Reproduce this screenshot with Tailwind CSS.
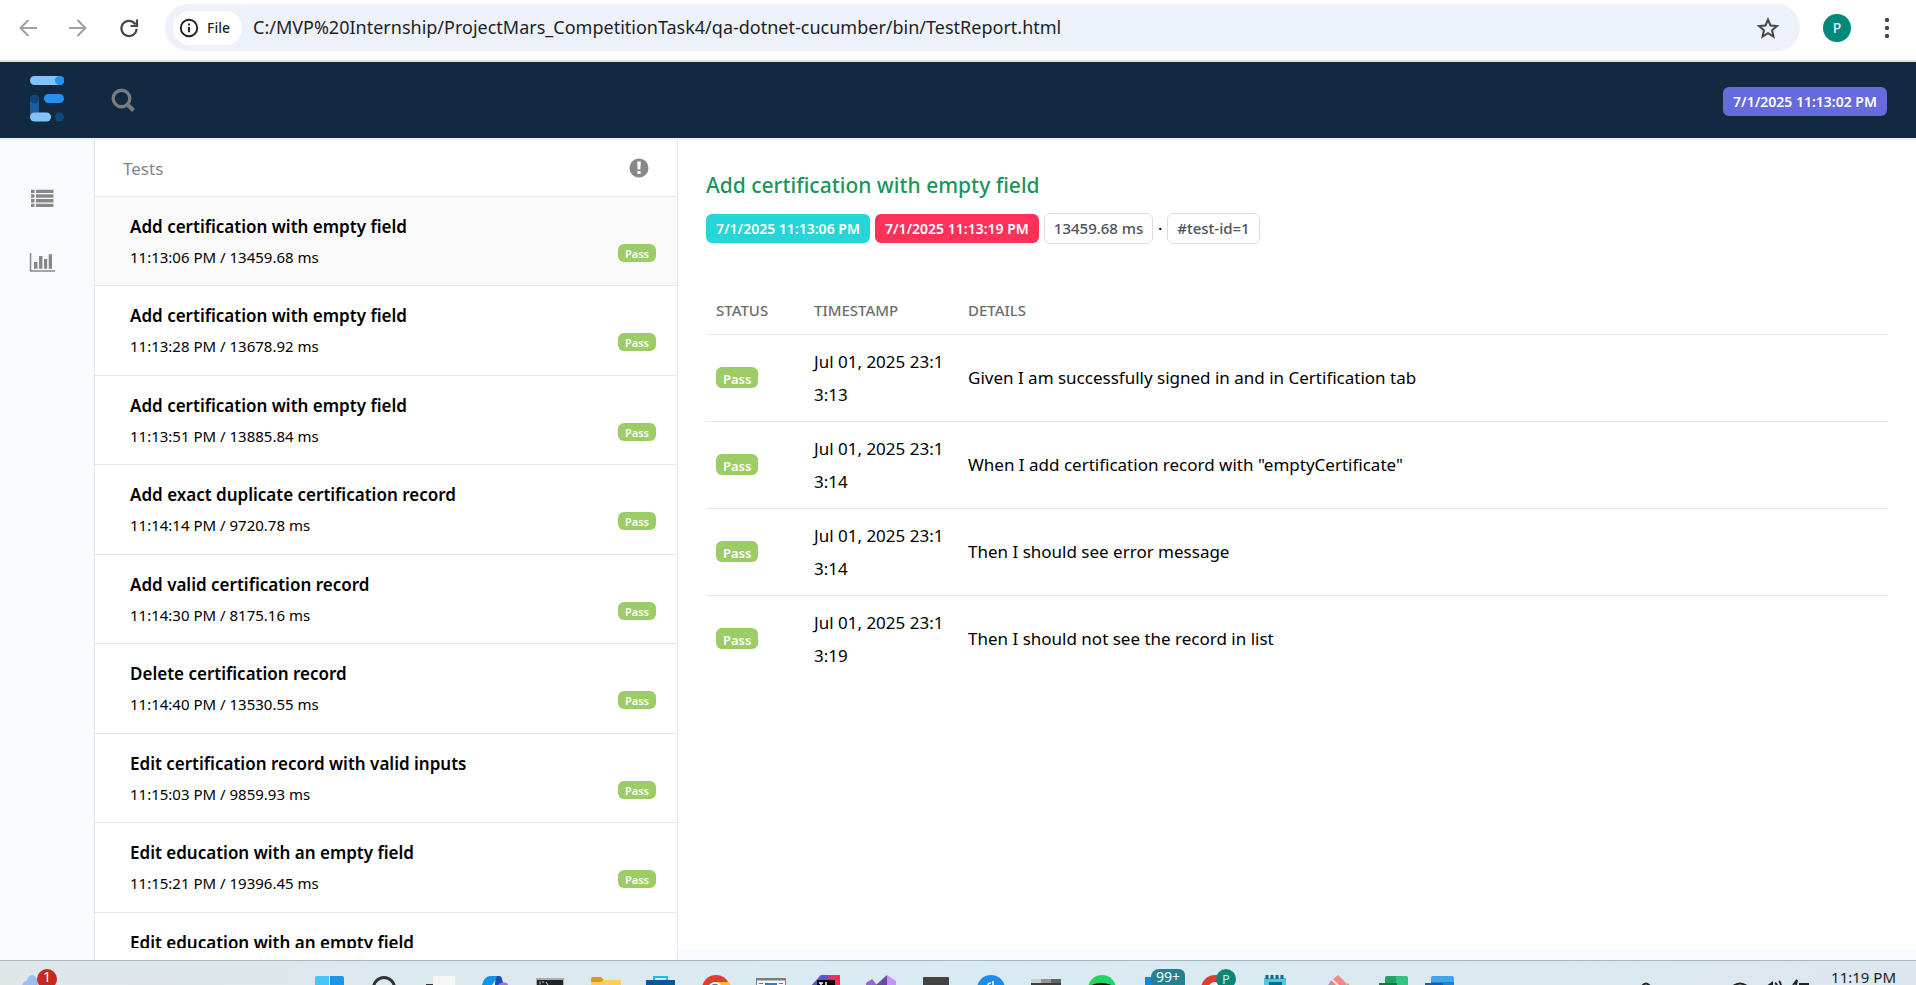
<!DOCTYPE html>
<html lang="en">
<head>
<meta charset="utf-8">
<title>TestReport</title>
<script src="https://cdn.jsdelivr.net/npm/@tailwindcss/browser@4"></script>
</head>
<body class="h-screen flex flex-col overflow-hidden bg-white font-['Noto_Sans','Open_Sans',sans-serif] text-black">

<!-- Browser toolbar -->
<div class="shrink-0 h-[62px] flex items-start pt-1 pl-4 pr-[17px] border-b-2 border-[#dfe4e0]">
  <div class="flex-1 flex items-center h-[47px]">
    <button class="w-6" aria-label="Back"><svg class="size-6" viewBox="0 0 24 24" fill="none" stroke="#a0a0a0" stroke-width="2"><path d="M21 12H5M12.500 4L4.500 12l8 8"/></svg></button>
    <button class="w-6 ml-[26px]" aria-label="Forward"><svg class="size-6" viewBox="0 0 24 24" fill="none" stroke="#a0a0a0" stroke-width="2"><path d="M3 12h16M11.500 4l8 8-8 8"/></svg></button>
    <button class="w-6 ml-[27px]" aria-label="Reload"><svg class="size-6" viewBox="0 0 24 24" fill="none" stroke="#444746" stroke-width="2.200"><path d="M18.500 8.500A7.600 7.600 0 1 0 19.600 12.800"/><path d="M20 3.500V10h-6.500"/></svg></button>
    <div class="flex-1 flex items-center h-[47px] ml-6 rounded-full bg-[#ecf1fa] pl-2 pr-5">
      <button class="flex items-center gap-2 h-[34px] pl-[6px] pr-3 rounded-full bg-white text-[14px] font-medium text-[#1f1f1f]">
        <svg class="size-5" viewBox="0 0 20 20" fill="none" stroke="#1f1f1f" stroke-width="1.900"><circle cx="10" cy="10" r="8.200"/><path d="M10 9v5.200M10 5.500v2"/></svg>File</button>
      <input class="flex-1 ml-[11px] outline-none bg-transparent text-[18px] text-[#1f1f1f]" aria-label="Address" value="C:/MVP%20Internship/ProjectMars_CompetitionTask4/qa-dotnet-cucumber/bin/TestReport.html">
      <button aria-label="Bookmark"><svg class="size-6" viewBox="0 0 24 24" fill="none" stroke="#444746" stroke-width="2"><path d="M12 3.600l2.500 5.900 6.400.6-4.900 4.200 1.500 6.300-5.500-3.400-5.500 3.400 1.500-6.300-4.900-4.200 6.400-.6z"/></svg></button>
    </div>
    <button class="size-7 ml-[23px] rounded-full bg-[#00897b] text-white text-[14px]" aria-label="Profile">P</button>
    <button class="ml-6" aria-label="Menu"><svg class="size-6" viewBox="0 0 24 24" fill="#444746"><circle cx="12" cy="4" r="2.200"/><circle cx="12" cy="12" r="2.200"/><circle cx="12" cy="20" r="2.200"/></svg></button>
  </div>
</div>

<!-- Report header -->
<header class="shrink-0 h-[78px] flex items-center bg-[#122942] border-b-2 border-[#eeeff1] pl-[30px] pr-[29px]">
  <a href="#" aria-label="Report home" class="block mb-[2px]"><svg class="w-[35px] h-[46px]" viewBox="0 0 35 46"><rect x="0" y="19" width="9" height="24" rx="4.500" fill="#17609f"/><circle cx="4.500" cy="23" r="4.500" fill="#12457d"/><rect x="0" y="0" width="34" height="9" rx="4.500" fill="#84c3f7"/><circle cx="29.500" cy="4.500" r="4.500" fill="#2391ee"/><rect x="14" y="18" width="20" height="9" rx="4.500" fill="#2391ee"/><rect x="0" y="36.500" width="21" height="9" rx="4.500" fill="#84c3f7"/><circle cx="29.500" cy="41" r="4.500" fill="#12457d"/></svg></a>
  <button class="ml-[46px]" aria-label="Search"><svg class="size-6" viewBox="0 0 24 24" fill="none" stroke="#7b7b7f" stroke-width="3.400"><circle cx="10.500" cy="10.500" r="8.300"/><path d="M16.500 16.500l6 6" stroke-width="4"/></svg></button>
  <span class="ml-auto mt-[2px] flex items-center h-[29px] px-[10px] rounded-md bg-[#656add] text-white text-[14px] font-semibold">7/1/2025 11:13:02 PM</span>
</header>

<main class="flex-1 min-h-0 flex bg-[#f7faff]">
  <nav class="w-[94px] flex flex-col items-start pt-12 pl-[29px] gap-11">
    <a href="#tests" aria-label="Tests"><svg class="w-[26px] h-5" viewBox="0 0 26 20" fill="#888"><path d="M2 1.700h3.500v3.400H2zM7 1.700h17.500v3.400H7zM2 6.300h3.500v3.400H2zM7 6.300h17.500v3.400H7zM2 11h3.500v3.400H2zM7 11h17.500v3.400H7zM2 15.700h3.500v3.400H2zM7 15.700h17.500v3.400H7z"/></svg></a>
    <a href="#dashboard" aria-label="Dashboard"><svg class="w-[26px] h-5" viewBox="0 0 26 20" fill="#888"><path d="M.8 1h1.500v17.300H26v1.500H.8zM5 10h3.500v6.700H5zM10 4h3.400v12.700H10zM15 7h3.200v9.700H15zM19.700 2.200H23v14.500h-3.300z"/></svg></a>
  </nav>

  <section id="tests" class="w-[584px] flex flex-col bg-white border-x border-[#e6e7e9]">
    <div class="shrink-0 h-[57px] flex items-center justify-between pl-7 pr-7 border-b border-[#e6e7e9]">
      <h2 class="pt-[2px] text-[17px] text-[#858585]">Tests</h2>
      <button aria-label="Status filter"><svg class="size-5" viewBox="0 0 20 20"><circle cx="10" cy="10" r="9.500" fill="#888"/><path d="M8.200 3.500h3.600l-.4 8H8.600zM8.400 13h3.200v3H8.400z" fill="#fff"/></svg></button>
    </div>
    <ul id="list" class="flex-1 min-h-0 overflow-hidden mb-3"></ul>
  </section>

  <section class="flex-1 min-w-0 mb-[11px] bg-white pl-7 pr-7 pt-[31px]">
    <h1 class="text-[21px] leading-7 font-medium text-[#1b955b]">Add certification with empty field</h1>
    <div class="mt-[14px] flex items-center gap-[5px] text-[14px] font-semibold">
      <span class="flex items-center h-[29px] px-[10px] rounded-md bg-[#25d5d8] text-white">7/1/2025 11:13:06 PM</span>
      <span class="flex items-center h-[29px] px-[10px] rounded-md bg-[#ff3159] text-white">7/1/2025 11:13:19 PM</span>
      <span class="flex items-center h-[31px] px-[9px] rounded-md border border-[#dcdde0] text-[15px] font-medium text-[#4d5160]">13459.68 ms</span>
      <span>·</span>
      <span class="flex items-center h-[31px] px-[9px] rounded-md border border-[#dcdde0] text-[15px] font-medium text-[#4d5160]">#test-id=1</span>
    </div>
    <table class="mt-[42px] w-full table-fixed text-left">
      <thead>
        <tr class="h-12 border-b border-[#e6e7e9] text-[15px] text-[#6d6d6d]">
          <th class="w-[98px] pl-[10px] font-medium">STATUS</th><th class="w-[154px] pl-[10px] font-medium">TIMESTAMP</th><th class="pl-[10px] font-medium">DETAILS</th>
        </tr>
      </thead>
      <tbody id="steps" class="text-[17px] leading-[33px]"></tbody>
    </table>
  </section>
</main>

<!-- Taskbar: the window ends part-way down it, so only icon tops show -->
<footer class="shrink-0 h-[25px] flex items-start justify-between overflow-hidden border-t border-[#a9b7bb] bg-linear-to-r from-[#dee6e8] via-[#d8ebf2] to-[#dde6ee] pl-5 pr-5">
  <div class="flex">
    <button class="relative w-[282px] h-6" aria-label="Weather">
      <svg class="w-10 h-6" viewBox="0 0 40 24"><path d="M2 25q1-5 5-5 1-6 5-6t6 7v4z" fill="#9dbcf0"/></svg>
      <span class="absolute left-[17px] top-2 w-5 h-5 rounded-full bg-[#c42b1c] text-white text-[14px] leading-4 text-center">1</span>
    </button>
    <button class="w-[55px]" aria-label="Start"><svg class="w-[55px] h-6" viewBox="0 0 55 24"><path d="M13 17q0-2 2-2h12v9H13z" fill="#45c4fa"/><path d="M28 15h12q2 0 2 2v7H28z" fill="#1d95e6"/></svg></button>
    <button class="w-[55px]" aria-label="Search apps"><svg class="w-[55px] h-6" viewBox="0 0 55 24"><circle cx="27" cy="27" r="10.500" fill="none" stroke="#333" stroke-width="3"/></svg></button>
    <button class="w-[55px]" aria-label="Task view"><svg class="w-[55px] h-6" viewBox="0 0 55 24"><path d="M14 23h12v2H14z" fill="#333"/><rect x="21" y="15" width="22" height="12" rx="1" fill="#f6f6f6"/></svg></button>
    <button class="w-[55px]" aria-label="Copilot"><svg class="w-[55px] h-6" viewBox="0 0 55 24"><path d="M15 24q2-9 9-9h7l-6 9z" fill="#0f94e8"/><path d="M30 15h3q2 1 3 7l-3 2h-5q0-6 2-9z" fill="#1753b6"/><path d="M31 24q2-3 6-2.500 4 0 4 2.500z" fill="#a769e0"/></svg></button>
    <button class="w-[55px]" aria-label="Terminal"><svg class="w-[55px] h-6" viewBox="0 0 55 24"><path d="M14 17h28v8H14z" fill="#a7adb0"/><path d="M15 19h26v6H15z" fill="#222"/><path d="M18 20.500v3M20 21h2M24 21l2 3" stroke="#ccc"/></svg></button>
    <button class="w-[55px]" aria-label="File Explorer"><svg class="w-[55px] h-6" viewBox="0 0 55 24"><path d="M14 18q0-2 2-2h8l3 3v5H14z" fill="#dd9c06"/><path d="M14 21h10l3-2h17v6H14z" fill="#fdcf57"/></svg></button>
    <button class="w-[55px]" aria-label="Store"><svg class="w-[55px] h-6" viewBox="0 0 55 24"><path d="M22 21v-5h13v5" fill="none" stroke="#22b9fb" stroke-width="2"/><path d="M14 19h29v6H14z" fill="#0c559c"/></svg></button>
    <button class="w-[55px]" aria-label="Chrome"><svg class="w-[55px] h-6" viewBox="0 0 55 24"><circle cx="29" cy="28" r="14" fill="#e33b2e"/><path d="M29 21h13l2 4H29z" fill="#fbc02d"/><circle cx="28" cy="28" r="7" fill="#fff"/><circle cx="28" cy="28" r="5.200" fill="#3b78e7"/></svg></button>
    <button class="w-[55px]" aria-label="Run dialog"><svg class="w-[55px] h-6" viewBox="0 0 55 24"><path d="M14 17h30v8H14z" fill="#7d7d7b"/><path d="M15 19.500h28v5H15z" fill="#f8f8f8"/><path d="M23 22h12v3H23z" fill="#1686d9"/><path d="M17 22.500h4M37 22.500h4" stroke="#777"/></svg></button>
    <button class="w-[55px]" aria-label="IntelliJ IDEA"><svg class="w-[55px] h-6" viewBox="0 0 55 24"><path d="M15 24l9-10h19v10z" fill="#d8327e"/><path d="M15 24l9-10h7l-3 10z" fill="#5a55d2"/><path d="M35 14h8v10h-6z" fill="#f72c5c"/><path d="M20 19h18v5H20z" fill="#000"/><path d="M22 22h4M24 22v2M29 21v3" stroke="#fff" stroke-width="1.500"/></svg></button>
    <button class="w-[55px]" aria-label="Visual Studio"><svg class="w-[55px] h-6" viewBox="0 0 55 24"><path d="M14 22l6-4 5 6H14z" fill="#9a63d1"/><path d="M24 24l11-10v10z" fill="#6b4a9f"/><path d="M35 14l9 6v4h-9z" fill="#c98ffb"/></svg></button>
    <button class="w-[55px]" aria-label="Console"><svg class="w-[55px] h-6" viewBox="0 0 55 24"><rect x="16" y="16" width="26" height="12" rx="1" fill="#434343"/></svg></button>
    <button class="w-[55px]" aria-label="Docs app"><svg class="w-[55px] h-6" viewBox="0 0 55 24"><circle cx="29" cy="28" r="14" fill="#1d8ceb"/><path d="M26 24q0-2 3-2M31 20v4" stroke="#fff" stroke-width="1.500" fill="none"/></svg></button>
    <button class="w-[55px]" aria-label="Device window"><svg class="w-[55px] h-6" viewBox="0 0 55 24"><path d="M14 18h10v5H14z" fill="#cfcfcf"/><path d="M24 18h10v5H24z" fill="#969696"/><path d="M34 18h10v5H34z" fill="#636363"/><path d="M14 22h30v3H14z" fill="#3d3d3d"/></svg></button>
    <button class="w-[55px]" aria-label="Spotify"><svg class="w-[55px] h-6" viewBox="0 0 55 24"><circle cx="30" cy="28" r="14" fill="#1ed760"/><path d="M21 25q8-3 17 0" stroke="#000" stroke-width="3" fill="none"/></svg></button>
    <button class="relative w-[55px]" aria-label="Mail">
      <svg class="w-[55px] h-6" viewBox="0 0 55 24"><path d="M18 16h8v9h-8z" fill="#1089d6"/></svg>
      <span class="absolute left-6 top-2 w-[34px] h-4 rounded-tl-lg rounded-tr-md bg-[#26808f] text-white text-[14px] leading-4 text-center">99+</span>
    </button>
    <button class="relative w-[55px]" aria-label="Chrome, profile P">
      <svg class="w-[55px] h-6" viewBox="0 0 55 24"><circle cx="33" cy="28" r="14" fill="#e33b2e"/><circle cx="33" cy="28" r="7" fill="#fff"/></svg>
      <span class="absolute left-[34px] top-2 w-5 h-5 rounded-full bg-[#0d8576] text-[#cfe9e4] text-[13px] leading-5 text-center">P</span>
    </button>
    <button class="w-[55px]" aria-label="Notepad"><svg class="w-[55px] h-6" viewBox="0 0 55 24"><path d="M27 17h22v8H27z" fill="#54c6e4"/><path d="M32 21h13v4H32z" fill="#0c6a93"/><path d="M30 14v4M35 14v4M40 14v4M45 14v4" stroke="#0b6b8f" stroke-width="3"/></svg></button>
    <button class="w-[55px]" aria-label="Paint"><svg class="w-[55px] h-6 overflow-visible" viewBox="0 0 55 24"><path d="M41 18l5-4 9 9-2 2h-5z" fill="#ff8585"/><path d="M39 19l6 6h-9z" fill="#ff7b7b"/><path d="M35 25l3-3 2 3z" fill="#7aa9f7"/><path d="M54 25l2-3 2 3z" fill="#7cc95c"/></svg></button>
    <button class="w-[55px]" aria-label="Excel"><svg class="w-[55px] h-6 overflow-visible" viewBox="0 0 55 24"><path d="M38 17q0-2 2-2h9v10H38z" fill="#22a366"/><path d="M49 15h10q2 0 2 2v8H49z" fill="#33c481"/><path d="M32 22h18v3H32z" fill="#107c41"/></svg></button>
    <button class="w-[55px]" aria-label="Word"><svg class="w-[55px] h-6" viewBox="0 0 55 24"><path d="M29 17q0-2 2-2h19q2 0 2 2v8H29z" fill="#41a5ee"/><path d="M29 21h23v4H29z" fill="#2b7cd3"/><path d="M23 22h18v3H23z" fill="#185abd"/></svg></button>
  </div>
  <div class="flex items-start">
    <svg class="w-[190px] h-6" viewBox="0 0 190 24" fill="none" stroke="#222" stroke-width="2"><path d="M1 25q4-5 8 0M92 25q7-5 14 0M127 25l4-3v3M134 22q2 1 2 3M138 20q2 2 2 5M152 24l4-5-1 5M158 23h10"/></svg>
    <span class="pt-2 text-[15px] leading-4 text-[#1c1c1c]">11:19 PM</span>
  </div>
</footer>

<script>
const tests = [
  ["Add certification with empty field", "11:13:06 PM / 13459.68 ms"],
  ["Add certification with empty field", "11:13:28 PM / 13678.92 ms"],
  ["Add certification with empty field", "11:13:51 PM / 13885.84 ms"],
  ["Add exact duplicate certification record", "11:14:14 PM / 9720.78 ms"],
  ["Add valid certification record", "11:14:30 PM / 8175.16 ms"],
  ["Delete certification record", "11:14:40 PM / 13530.55 ms"],
  ["Edit certification record with valid inputs", "11:15:03 PM / 9859.93 ms"],
  ["Edit education with an empty field", "11:15:21 PM / 19396.45 ms"],
  ["Edit education with an empty field", ""],
];
document.getElementById("list").innerHTML = tests.map(([name, time]) => `
  <li class="h-[89px] even:h-[90px] first:bg-[#fafafa] border-b border-[#e6e7e9]">
    <a href="#test" class="block h-full pl-[35px] pr-[21px] pt-[15px]">
      <span class="block text-[17px] leading-[30px] font-semibold">${name}</span>
      ${time && `<span class="flex justify-between items-start">
        <span class="text-[15px] leading-[31px]">${time}</span>
        <span class="mt-[2px] h-[18px] px-[7px] rounded-md bg-[#9ccc65] text-white text-[11px] leading-5 font-semibold">Pass</span>
      </span>`}
    </a>
  </li>`).join("");
const steps = [
  ["Jul 01, 2025 23:13:13", "Given I am successfully signed in and in Certification tab"],
  ["Jul 01, 2025 23:13:14", "When I add certification record with \"emptyCertificate\""],
  ["Jul 01, 2025 23:13:14", "Then I should see error message"],
  ["Jul 01, 2025 23:13:19", "Then I should not see the record in list"],
];
document.getElementById("steps").innerHTML = steps.map(([time, text]) => `
  <tr class="border-b border-[#e6e7e9] last:border-0">
    <td class="pl-[10px]"><span class="block w-fit h-[21px] px-[7px] rounded-md bg-[#9ccc65] text-white text-[13px] leading-6 font-semibold">Pass</span></td>
    <td class="px-[10px] py-[10px] break-all">${time}</td>
    <td class="px-[10px]">${text}</td>
  </tr>`).join("");
</script>
</body>
</html>
